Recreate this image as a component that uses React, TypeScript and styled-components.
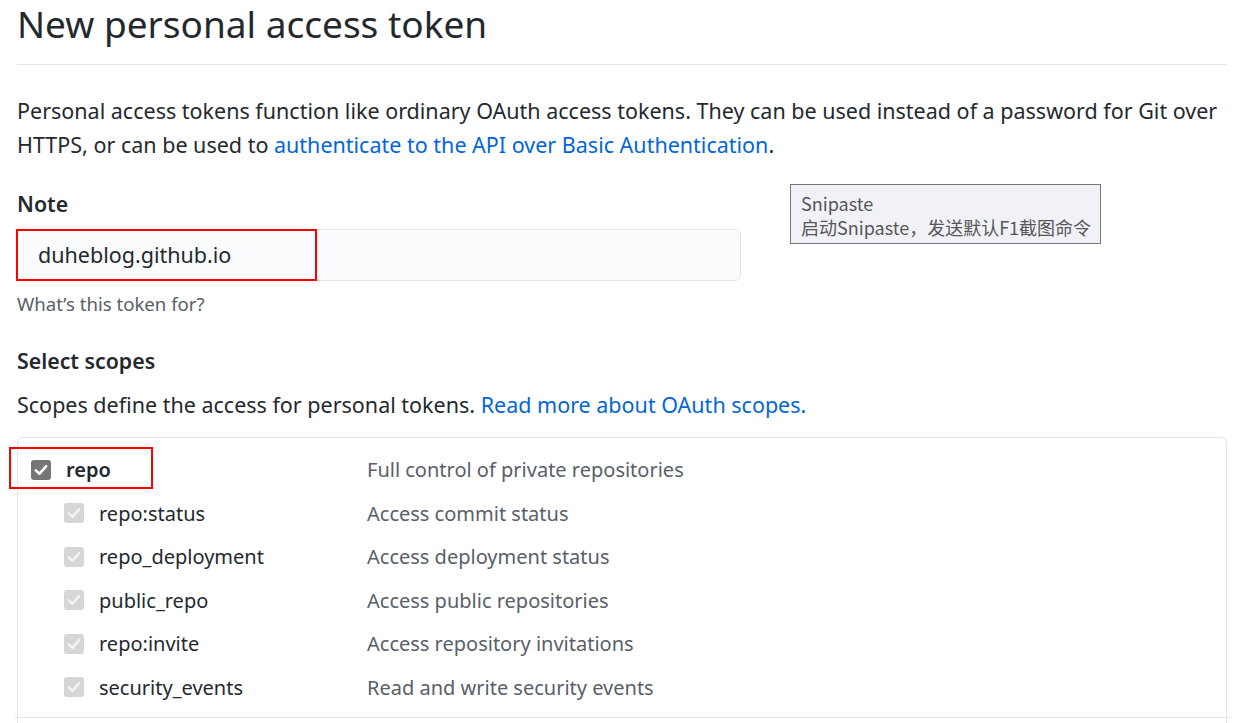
import React from "react";
import styled, { createGlobalStyle } from "styled-components";

const Global = createGlobalStyle`
  html, body { margin: 0; padding: 0; background: #fff; }
  body {
    font-family: "Noto Sans", "Open Sans", "Noto Sans CJK SC", sans-serif;
    color: #24292e;
    overflow: hidden;
  }
`;

const Page = styled.div`
  position: relative;
  width: 1236px;
  height: 723px;
  overflow: hidden;
`;

const Content = styled.div`
  padding: 0 9px 0 17px;
`;

const Subhead = styled.div`
  border-bottom: 1px solid #e1e4e8;
  padding-bottom: 16px;
`;

const Title = styled.h1`
  margin: 0;
  font-size: 37px;
  line-height: 48px;
  font-weight: 400;
  color: #24292e;
`;

const Lead = styled.p<{ $top: number }>`
  margin: ${(p) => p.$top}px 0 0;
  font-size: 21.5px;
  line-height: 34px;
`;

const Link = styled.a`
  color: #0366d6;
  text-decoration: none;
`;

const Label = styled.div<{ $top: number }>`
  margin-top: ${(p) => p.$top}px;
  font-size: 21.3px;
  line-height: 30px;
  font-weight: 600;
`;

const InputWrap = styled.div`
  position: relative;
  margin-top: 10px;
  width: 724px;
`;

const Input = styled.div`
  box-sizing: border-box;
  height: 52px;
  width: 100%;
  background: #fafbfc;
  border: 1px solid #e1e4e8;
  border-radius: 6px;
  padding-left: 20px;
  font-size: 21.5px;
  line-height: 50px;
`;

const RedMark = styled.div<{ $l: number; $t: number; $w: number; $h: number }>`
  position: absolute;
  left: ${(p) => p.$l}px;
  top: ${(p) => p.$t}px;
  width: ${(p) => p.$w}px;
  height: ${(p) => p.$h}px;
  border: 2px solid #ff0000;
  box-sizing: border-box;
  pointer-events: none;
`;

const Hint = styled.div`
  margin-top: 10px;
  font-size: 18.6px;
  line-height: 26px;
  color: #586069;
`;

const ScopesBox = styled.div`
  margin-top: 15px;
  border: 1px solid #e1e4e8;
  border-radius: 6px;
  height: 400px;
`;

const Group = styled.div`
  padding: 10px 0 8px;
`;

const NextGroup = styled.div`
  border-top: 1px solid #e1e4e8;
  margin: 0 -4px;
  height: 40px;
`;

const Row = styled.div`
  position: relative;
  display: grid;
  grid-template-columns: 349px 1fr;
  align-items: center;
  height: 43.5px;
`;

const NameCell = styled.div<{ $sub?: boolean }>`
  display: flex;
  align-items: center;
  gap: 15px;
  padding-left: ${(p) => (p.$sub ? 46 : 13)}px;
  font-size: 20px;
  font-weight: ${(p) => (p.$sub ? 400 : 600)};
  color: #24292e;
`;

const Desc = styled.div`
  font-size: 20px;
  color: #586069;
`;

const Tooltip = styled.div`
  position: absolute;
  left: 790px;
  top: 184px;
  width: 311px;
  height: 60px;
  box-sizing: border-box;
  background: #f1f2f7;
  border: 1px solid #767676;
  padding: 6px 0 0 10px;
  font-family: "Noto Sans CJK SC", "Noto Sans", sans-serif;
  font-size: 18px;
  line-height: 24px;
  color: #575757;
`;

const Check: React.FC<{ disabled?: boolean }> = ({ disabled }) => (
  <svg width="20" height="20" viewBox="0 0 20 20">
    <rect x="0" y="0" width="20" height="20" rx="3" fill={disabled ? "#d6d6d6" : "#767676"} />
    <path
      d="M4.8 10.4 L8.4 13.8 L15.2 6.2"
      stroke={disabled ? "#f2f2f2" : "#ffffff"}
      strokeWidth="2.6"
      fill="none"
      strokeLinecap="round"
      strokeLinejoin="round"
    />
  </svg>
);

const subs = [
  ["repo:status", "Access commit status"],
  ["repo_deployment", "Access deployment status"],
  ["public_repo", "Access public repositories"],
  ["repo:invite", "Access repository invitations"],
  ["security_events", "Read and write security events"],
];

export default function App() {
  return (
    <Page>
      <Global />
      <Content>
        <Subhead>
          <Title>New personal access token</Title>
        </Subhead>
        <Lead $top={29}>
          Personal access tokens function like ordinary OAuth access tokens. They can be used instead of a password for Git over HTTPS, or can be used to{" "}
          <Link>authenticate to the API over Basic Authentication</Link>.
        </Lead>
        <Label $top={27}>Note</Label>
        <InputWrap>
          <Input>duheblog.github.io</Input>
          <RedMark $l={-1} $t={0} $w={301} $h={52} />
        </InputWrap>
        <Hint>What’s this token for?</Hint>
        <Label $top={29}>Select scopes</Label>
        <Lead $top={12}>
          Scopes define the access for personal tokens. <Link>Read more about OAuth scopes.</Link>
        </Lead>
        <ScopesBox>
          <Group>
            <Row>
              <NameCell>
                <Check />
                repo
              </NameCell>
              <Desc>Full control of private repositories</Desc>
              <RedMark $l={-9} $t={-1} $w={144} $h={42} />
            </Row>
            {subs.map(([n, d]) => (
              <Row key={n}>
                <NameCell $sub>
                  <Check disabled />
                  {n}
                </NameCell>
                <Desc>{d}</Desc>
              </Row>
            ))}
          </Group>
          <NextGroup />
        </ScopesBox>
      </Content>
      <Tooltip>
        Snipaste
        <br />
        启动Snipaste，发送默认F1截图命令
      </Tooltip>
    </Page>
  );
}
